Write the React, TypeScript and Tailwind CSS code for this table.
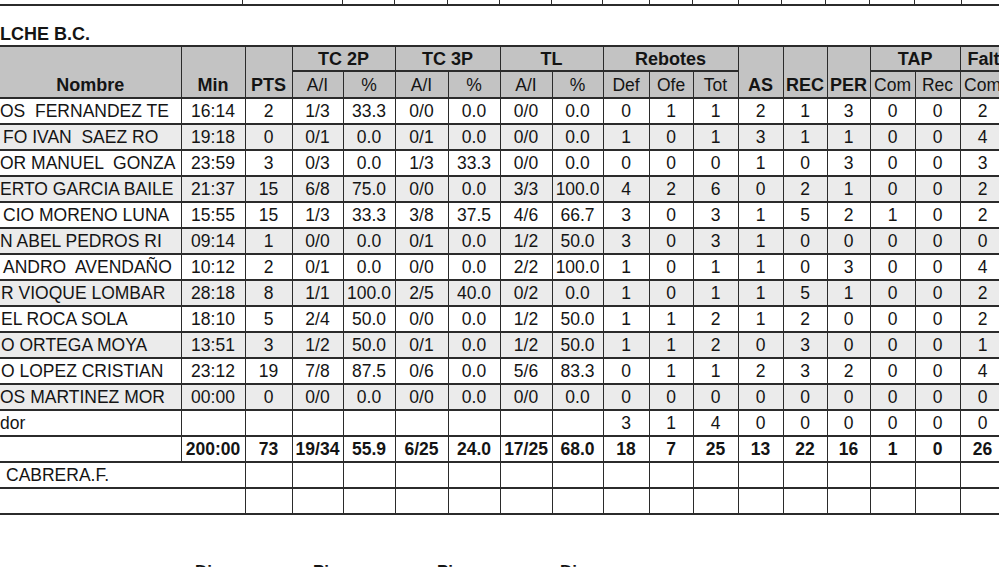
import React from 'react';

type Row = { name: string; pad: string; shade: boolean; vals: string[] };

const players: Row[] = [
    { name: 'OS  FERNANDEZ TE', pad: 'pl-0', shade: false, vals: ['16:14', '2', '1/3', '33.3', '0/0', '0.0', '0/0', '0.0', '0', '1', '1', '2', '1', '3', '0', '0', '2', ''] },
    { name: 'FO IVAN  SAEZ RO', pad: 'pl-[3px]', shade: true, vals: ['19:18', '0', '0/1', '0.0', '0/1', '0.0', '0/0', '0.0', '1', '0', '1', '3', '1', '1', '0', '0', '4', ''] },
    { name: 'OR MANUEL  GONZA', pad: 'pl-0', shade: false, vals: ['23:59', '3', '0/3', '0.0', '1/3', '33.3', '0/0', '0.0', '0', '0', '0', '1', '0', '3', '0', '0', '3', ''] },
    { name: 'ERTO GARCIA BAILE', pad: 'pl-0', shade: true, vals: ['21:37', '15', '6/8', '75.0', '0/0', '0.0', '3/3', '100.0', '4', '2', '6', '0', '2', '1', '0', '0', '2', ''] },
    { name: 'CIO MORENO LUNA', pad: 'pl-[3px]', shade: false, vals: ['15:55', '15', '1/3', '33.3', '3/8', '37.5', '4/6', '66.7', '3', '0', '3', '1', '5', '2', '1', '0', '2', ''] },
    { name: 'N ABEL PEDROS RI', pad: 'pl-0', shade: true, vals: ['09:14', '1', '0/0', '0.0', '0/1', '0.0', '1/2', '50.0', '3', '0', '3', '1', '0', '0', '0', '0', '0', ''] },
    { name: 'ANDRO  AVENDAÑO', pad: 'pl-[3px]', shade: false, vals: ['10:12', '2', '0/1', '0.0', '0/0', '0.0', '2/2', '100.0', '1', '0', '1', '1', '0', '3', '0', '0', '4', ''] },
    { name: 'R VIOQUE LOMBAR', pad: 'pl-[1px]', shade: true, vals: ['28:18', '8', '1/1', '100.0', '2/5', '40.0', '0/2', '0.0', '1', '0', '1', '1', '5', '1', '0', '0', '2', ''] },
    { name: 'EL ROCA SOLA', pad: 'pl-[1px]', shade: false, vals: ['18:10', '5', '2/4', '50.0', '0/0', '0.0', '1/2', '50.0', '1', '1', '2', '1', '2', '0', '0', '0', '2', ''] },
    { name: 'O ORTEGA MOYA', pad: 'pl-[1px]', shade: true, vals: ['13:51', '3', '1/2', '50.0', '0/1', '0.0', '1/2', '50.0', '1', '1', '2', '0', '3', '0', '0', '0', '1', ''] },
    { name: 'O LOPEZ CRISTIAN', pad: 'pl-[1px]', shade: false, vals: ['23:12', '19', '7/8', '87.5', '0/6', '0.0', '5/6', '83.3', '0', '1', '1', '2', '3', '2', '0', '0', '4', ''] },
    { name: 'OS MARTINEZ MOR', pad: 'pl-0', shade: true, vals: ['00:00', '0', '0/0', '0.0', '0/0', '0.0', '0/0', '0.0', '0', '0', '0', '0', '0', '0', '0', '0', '0', ''] },
    { name: 'dor', pad: 'pl-0', shade: false, vals: ['', '', '', '', '', '', '', '', '3', '1', '4', '0', '0', '0', '0', '0', '0', ''] }
];

const totals = ['200:00', '73', '19/34', '55.9', '6/25', '24.0', '17/25', '68.0', '18', '7', '25', '13', '22', '16', '1', '0', '26', ''];

const td = 'border-x border-y-2 border-[#2b2b2b] p-0 pt-[2px] text-center whitespace-nowrap overflow-hidden';
const first = 'border-l-0 border-r border-y-2 border-[#2b2b2b] p-0 pt-[2px] text-left whitespace-pre overflow-hidden';
const th = 'border-x border-y-2 border-[#2b2b2b] p-0 text-center whitespace-nowrap overflow-hidden bg-[#c3c3c3]';

// widths of the cut-off table row at the very top
const topCells = [
    'w-[243px]', 'w-[100px]', 'w-[52px]', 'w-[53px]', 'w-[52px]', 'w-[52px]', 'w-[51px]', 'w-[47px]',
    'w-[43px]', 'w-[46px]', 'w-[43px]', 'w-[44px]', 'w-[44px]', 'w-[45px]', 'w-[47px]', 'w-[48px]'
];

export default function App() {
    return (
        <div className="w-[999px] h-[567px] overflow-hidden bg-white text-[#141414] font-['Liberation_Sans',Arial,sans-serif]">
            <div className="flex h-[6px] w-[1010px] border-b-2 border-[#2b2b2b]">
                {topCells.map((w, i) => (
                    <div key={i} className={`${w} shrink-0 border-r border-[#2b2b2b]`} />
                ))}
            </div>

            <div className="mt-[18px] h-[20px] text-[18px] leading-[20px] font-bold">LCHE B.C.</div>

            <table className="mt-[1px] table-fixed border-collapse w-[1050px] text-[17.5px] leading-none">
                <colgroup>
                    <col className="w-[181px]" />
                    <col className="w-[64px]" />
                    <col className="w-[47px]" />
                    <col className="w-[51px]" />
                    <col className="w-[52px]" />
                    <col className="w-[53px]" />
                    <col className="w-[52px]" />
                    <col className="w-[52px]" />
                    <col className="w-[51px]" />
                    <col className="w-[46px]" />
                    <col className="w-[44px]" />
                    <col className="w-[45px]" />
                    <col className="w-[45px]" />
                    <col className="w-[44px]" />
                    <col className="w-[43px]" />
                    <col className="w-[45px]" />
                    <col className="w-[45px]" />
                    <col className="w-[45px]" />
                    <col className="w-[45px]" />
                </colgroup>
                <thead>
                    <tr className="h-[25px] font-bold text-[18px]">
                        <th rowSpan={2} className={`${th} border-l-0 align-bottom pb-[3px]`}>Nombre</th>
                        <th rowSpan={2} className={`${th} align-bottom pb-[3px]`}>Min</th>
                        <th rowSpan={2} className={`${th} align-bottom pb-[3px]`}>PTS</th>
                        <th colSpan={2} className={th}>TC 2P</th>
                        <th colSpan={2} className={th}>TC 3P</th>
                        <th colSpan={2} className={th}>TL</th>
                        <th colSpan={3} className={th}>Rebotes</th>
                        <th rowSpan={2} className={`${th} align-bottom pb-[3px]`}>AS</th>
                        <th rowSpan={2} className={`${th} align-bottom pb-[3px]`}>REC</th>
                        <th rowSpan={2} className={`${th} align-bottom pb-[3px]`}>PER</th>
                        <th colSpan={2} className={th}>TAP</th>
                        <th colSpan={2} className={`${th} text-left pl-[7px]`}>Faltas</th>
                    </tr>
                    <tr className="h-[27px] font-normal">
                        {['A/I', '%', 'A/I', '%', 'A/I', '%', 'Def', 'Ofe', 'Tot', 'Com', 'Rec', 'Com', 'Rec'].map((h, i) => (
                            <th key={i} className={`${th} font-normal pt-[2px]`}>{h}</th>
                        ))}
                    </tr>
                </thead>
                <tbody>
                    {players.map((p, i) => (
                        <tr key={i} className={`h-[26px] ${p.shade ? 'bg-[#ebebeb]' : 'bg-white'}`}>
                            <td className={`${first} ${p.pad}`}>{p.name}</td>
                            {p.vals.map((v, j) => (
                                <td key={j} className={td}>{v}</td>
                            ))}
                        </tr>
                    ))}
                    <tr className="h-[26px] font-bold">
                        <td className={first} />
                        {totals.map((v, j) => (
                            <td key={j} className={td}>{v}</td>
                        ))}
                    </tr>
                    <tr className="h-[26px]">
                        <td colSpan={2} className={`${first} pl-[6px]`}>CABRERA.F.</td>
                        {Array.from({ length: 17 }).map((_, j) => (
                            <td key={j} className={td} />
                        ))}
                    </tr>
                    <tr className="h-[26px]">
                        <td colSpan={2} className={first} />
                        {Array.from({ length: 17 }).map((_, j) => (
                            <td key={j} className={td} />
                        ))}
                    </tr>
                </tbody>
            </table>

            <div className="mt-[47px] flex text-[17px] leading-[20px] font-bold">
                <span className="w-[195px] shrink-0" />
                <span className="w-[118px] shrink-0">Di</span>
                <span className="w-[124px] shrink-0">Pi</span>
                <span className="w-[123px] shrink-0">Pi</span>
                <span className="shrink-0">Di</span>
            </div>
        </div>
    );
}
